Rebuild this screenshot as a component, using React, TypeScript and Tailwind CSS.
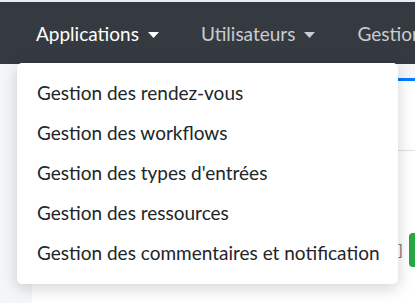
const items = [
  "Gestion des rendez-vous",
  "Gestion des workflows",
  "Gestion des types d'entrées",
  "Gestion des ressources",
  "Gestion des commentaires et notification",
];

function Caret({ className }: { className: string }) {
  return (
    <svg width="11" height="6" viewBox="0 0 11 6" className={className}>
      <path d="M0 0h11L5.5 6z" fill="currentColor" />
    </svg>
  );
}

export default function App() {
  return (
    <div className="relative w-[415px] h-[303px] overflow-hidden bg-[#f4f6f9] font-['Lato',sans-serif]">
      <div className="h-[2px] bg-[#e9ecef]" />
      <nav className="h-[62px] bg-[#343a40] flex items-center pl-[36px] pt-[3px] gap-[42px] whitespace-nowrap text-[19px]">
        <div className="flex items-center gap-[9px] text-white">
          Applications <Caret className="text-white" />
        </div>
        <div className="flex items-center gap-[9px] text-[#c9ccd0]">
          Utilisateurs <Caret className="text-[#c9ccd0]" />
        </div>
        <div className="text-[#c9ccd0]">Gestion</div>
      </nav>

      <div className="pl-[32px] pt-[14px]">
        <div className="bg-white border-t-[3px] border-[#007bff] h-[260px] flex flex-col">
          <div className="h-[70px] border-b border-[#dee2e6]" />
          <div className="flex justify-end items-center mt-[82px] gap-[6px]">
            <span className="text-[#6c757d] text-[16px]">]</span>
            <div className="w-[6px] h-[34px] bg-[#28a745] rounded-l-[4px]" />
          </div>
        </div>
      </div>

      <div className="absolute left-[17px] top-[63px] w-[381px] rounded-[5px] bg-white shadow-[0_4px_16px_rgba(0,0,0,0.18)] pt-[10px] pb-[11px]">
        {items.map((t) => (
          <div key={t} className="h-[40px] flex items-center px-[20px] text-[19px] text-[#212529] whitespace-nowrap">
            {t}
          </div>
        ))}
      </div>
    </div>
  );
}
